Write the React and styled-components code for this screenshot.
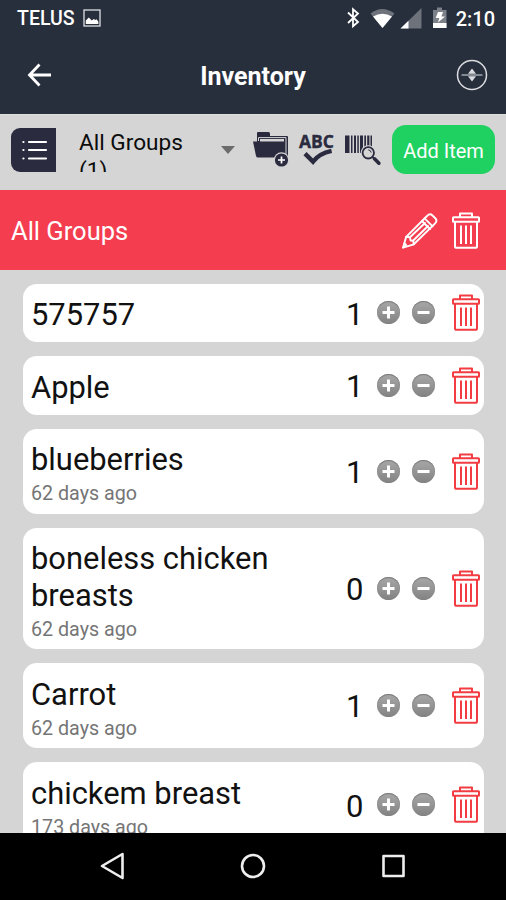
import React from 'react';
import styled, { createGlobalStyle } from 'styled-components';

const GlobalStyle = createGlobalStyle`
  * {
    box-sizing: border-box;
  }

  body {
    margin: 0;
    font-family: Roboto, "Liberation Sans", sans-serif;
  }

  button {
    padding: 0;
    border: 0;
    background: none;
    font-family: inherit;
  }

  svg {
    display: block;
    flex: none;
    overflow: visible;
  }
`;

const Screen = styled.div`
  display: flex;
  flex-direction: column;
  width: 506px;
  height: 900px;
  overflow: hidden;
  background: #d5d5d5;
`;

const Header = styled.header`
  flex: none;
  height: 114px;
  background: #272e3c;
  color: #fff;
`;

const StatusBar = styled.div`
  display: flex;
  align-items: center;
  height: 36px;
  padding: 0 11px 0 17px;
  font-size: 20px;
  font-weight: 500;
  line-height: 36px;
`;

const Carrier = styled.span`
  width: 66px;
  padding-top: 2px;
  font-size: 19.5px;
`;

const Clock = styled.span`
  padding-top: 2px;
`;

const StatusIcons = styled.div`
  display: flex;
  align-items: center;
  margin-left: auto;
  margin-right: 8px;
`;

const TitleBar = styled.div`
  display: grid;
  grid-template-columns: 60px 1fr 60px;
  align-items: center;
  height: 77px;
`;

const Title = styled.h1`
  margin: 4px 0 0;
  font-size: 25px;
  font-weight: 700;
  line-height: 30px;
  text-align: center;
`;

const IconButton = styled.button`
  display: flex;
  justify-self: ${(props) => props.$align || 'center'};
  margin-right: ${(props) => props.$gap || 0}px;
`;

const Toolbar = styled.div`
  display: flex;
  align-items: center;
  flex: none;
  height: 76px;
  padding: 0 11px;
  border-top: 1px solid #dedede;
`;

const ListButton = styled.button`
  display: flex;
  align-items: center;
  justify-content: center;
  width: 45px;
  height: 44px;
  margin-top: -5px;
  border-radius: 9px 0 0 9px;
  background: #2b2b40;
`;

const GroupSelect = styled.div`
  display: flex;
  align-items: center;
  width: 157px;
  height: 43px;
  margin: -5px 17px 0 23px;
`;

const GroupLabel = styled.div`
  width: 142px;
  height: 43px;
  overflow: hidden;
  color: #0c0c0c;
  font-size: 22.6px;
  line-height: 28.5px;
`;

const ToolIcons = styled.div`
  display: flex;
  align-items: center;
  gap: 10px;
  margin-top: -5px;
`;

const AddButton = styled.button`
  width: 103px;
  height: 49px;
  margin: -6px 0 0 auto;
  padding-top: 2px;
  border-radius: 14px;
  background: #1fd160;
  color: #fff;
  font-size: 20px;
`;

const GroupHeader = styled.div`
  display: flex;
  align-items: center;
  flex: none;
  height: 80px;
  padding: 0 26px 0 11px;
  background: #f43e50;
  color: #fff;
`;

const GroupName = styled.h2`
  flex: 1;
  margin: 1px 0 0;
  font-size: 25.5px;
  font-weight: 400;
`;

const List = styled.main`
  display: flex;
  flex: 1;
  flex-direction: column;
  gap: 14px;
  min-height: 0;
  padding: 14px 22.5px 0 22.5px;
  overflow: hidden;
`;

const Card = styled.div`
  display: flex;
  align-items: center;
  flex: none;
  padding: 13.2px 4px 8.7px 8.5px;
  border-radius: 14px;
  background: #fff;
`;

const ItemText = styled.div`
  width: 260px;
`;

const ItemName = styled.div`
  color: #111;
  font-size: 30.9px;
  line-height: 36.5px;
`;

const ItemAge = styled.div`
  margin-top: 3.5px;
  color: #757575;
  font-size: 19.7px;
  line-height: 23.2px;
`;

const Controls = styled.div`
  display: flex;
  align-items: center;
  margin: -5px 0 0 auto;
`;

const Count = styled.span`
  margin: 4px 13.5px 0 0;
  color: #111;
  font-size: 31px;
  line-height: 36.5px;
`;

const RoundButton = styled.button`
  width: 23px;
  height: 23px;
  margin-right: ${(props) => props.$gap}px;
  border-radius: 50%;
  background: linear-gradient(#a8a8a8, #828282);
  box-shadow: inset 0 1px 1px #777;
`;

const NavBar = styled.nav`
  display: flex;
  align-items: center;
  justify-content: space-between;
  flex: none;
  height: 67px;
  padding: 0 99px 1px;
  background: #000;
`;

const Trash = ({ color }) => (
  <svg width="28" height="37" viewBox="0 0 28 37" fill="none" stroke={color} strokeWidth="2" strokeLinejoin="round">
    <path d="M8 5V1.500h12V5" />
    <rect x="1" y="5.200" width="26" height="4.600" rx="0.600" />
    <path d="M3 10v24.200q0 1.600 1.600 1.600h18.800q1.600 0 1.600-1.600V10" />
    <path d="M9 13.500v18.500M14 13.500v18.500M19 13.500v18.500" />
  </svg>
);

const Pencil = () => (
  <svg width="36" height="37" viewBox="0 0 36 37" fill="none" stroke="#fff" strokeWidth="1.900" strokeLinejoin="round" strokeLinecap="round">
    <path d="M1 35.700L4.200 24.800 25 4q3-3 5.500-.500l3 3q2.200 2.400-.600 5.200L11.800 32.300z" />
    <path d="M4.200 24.800l3.700.500.700 3.200 2.700.400.500 3.400M20 9l8 8M22.600 6.400l8 8M8 25.300L23 11M11 28.800L26 14M1.300 35.400l2.800-2.600-1.800-1.500" />
  </svg>
);

const FolderAdd = () => (
  <svg width="36" height="36" viewBox="0 0 36 36">
    <path d="M4 10V1q0-1 1-1h10.500q1.500 0 1.500 1.500V4h17q1 0 1 1v20H31V7H7v4z" fill="#2b2b40" />
    <path d="M5.500 9V5.600H33V25" fill="none" stroke="#d5d5d5" />
    <path d="M0 9.500h31.500V25.500H5q-1.500 0-2-1.500z" fill="#2b2b40" />
    <circle cx="28.500" cy="28" r="7.700" fill="#d5d5d5" />
    <circle cx="28.500" cy="28" r="6.600" fill="#2b2b40" />
    <path d="M28.500 24.500v7M25 28h7" stroke="#fff" strokeWidth="1.700" />
  </svg>
);

const SpellCheck = () => (
  <svg width="36" height="32" viewBox="0 0 36 32">
    <text x="0" y="14" fontFamily="Open Sans" fontWeight="700" fontSize="18.500" textLength="35" lengthAdjust="spacingAndGlyphs" fill="#2b2b40" stroke="#2b2b40" strokeWidth="0.400">ABC</text>
    <path d="M6 19.600l8 8q6-8 18.600-10.700" fill="none" stroke="#2b2b40" strokeWidth="4.400" />
  </svg>
);

const BarcodeSearch = () => (
  <svg width="36" height="31" viewBox="0 0 36 31">
    <path d="M0 .500h4.500v17.500H0zM6 .500h1.500v17.500H6zM9 .500h2v17.500H9zM12.300 .500h1.500v17.500h-1.500zM15 .500h3v17.500h-3zM19.300 .500h1.700v17.500h-1.700zM22.200 .500h2.200v17.500h-2.200zM25.500 .500h1.500v17.500h-1.500z" fill="#2b2b40" />
    <circle cx="23.300" cy="17.800" r="7.600" fill="#d5d5d5" />
    <circle cx="23.300" cy="17.800" r="5.700" fill="none" stroke="#2b2b40" strokeWidth="1.800" />
    <path d="M23.300 14.800q2.500.300 2.900 2.800" fill="none" stroke="#2b2b40" />
    <path d="M27.500 22l2 1.800" stroke="#2b2b40" strokeWidth="1.800" />
    <path d="M29.500 23.800l4.400 4.400" stroke="#2b2b40" strokeWidth="3.600" strokeLinecap="round" />
  </svg>
);

const PictureIcon = () => (
  <svg width="18" height="18" viewBox="0 0 18 18">
    <rect x="1" y="1" width="16" height="16" fill="none" stroke="#dfe1e4" strokeWidth="1.300" />
    <path d="M2.800 15v-3.500l3-3 3 3 2-1.500 1.600 1 1.200-.800 1.800 2.600V15z" fill="#fff" />
  </svg>
);

const PhoneStatus = () => (
  <svg width="102" height="24" viewBox="0 0 102 24">
    <path d="M2 6.500l10 9.500-5 4.200V3.300L12 7.500 2 17" fill="none" stroke="#fff" strokeWidth="1.800" />
    <path d="M24.500 7.500Q36-1.500 48.500 7.500L36.500 22z" fill="#6d727b" />
    <path d="M27 10.600q9.500-5.800 19 0L36.500 22z" fill="#fff" />
    <path d="M54.500 22.500L75.500 2v20.500z" fill="#6d727b" />
    <path d="M54.500 22.500l8-7.800v7.800z" fill="#fff" />
    <path d="M91 1.500h5V4h4.500v18H87V4h4z" fill="#7c8088" />
    <path d="M87 17h13.500v5H87zM92 6h5l-1.600 4.500H99L92 16.500l1.300-4.500h-3.600z" fill="#fff" />
  </svg>
);

const items = [
  { name: '575757', count: 1 },
  { name: 'Apple', count: 1 },
  { name: 'blueberries', age: '62 days ago', count: 1 },
  { name: 'boneless chicken breasts', age: '62 days ago', count: 0 },
  { name: 'Carrot', age: '62 days ago', count: 1 },
  { name: 'chickem breast', age: '173 days ago', count: 0 },
];

const Item = ({ item }) => (
  <Card>
    <ItemText>
      <ItemName>{item.name}</ItemName>
      {item.age && <ItemAge>{item.age}</ItemAge>}
    </ItemText>
    <Controls>
      <Count>{item.count}</Count>
      <RoundButton $gap={12} aria-label="Increase">
        <svg width="23" height="23" viewBox="0 0 23 23" stroke="#fff" strokeWidth="3">
          <path d="M11.500 5.500v12M5.500 11.500h12" />
        </svg>
      </RoundButton>
      <RoundButton $gap={16.5} aria-label="Decrease">
        <svg width="23" height="23" viewBox="0 0 23 23" stroke="#fff" strokeWidth="3">
          <path d="M5.500 11.500h12" />
        </svg>
      </RoundButton>
      <IconButton aria-label="Delete">
        <Trash color="#f23c42" />
      </IconButton>
    </Controls>
  </Card>
);

const App = () => (
  <Screen>
    <GlobalStyle />
    <Header>
      <StatusBar>
        <Carrier>TELUS</Carrier>
        <PictureIcon />
        <StatusIcons>
          <PhoneStatus />
        </StatusIcons>
        <Clock>2:10</Clock>
      </StatusBar>
      <TitleBar>
        <IconButton $align="end" $gap={9} aria-label="Back">
          <svg width="24" height="24" viewBox="0 0 24 24" fill="none" stroke="#fff" strokeWidth="2.800">
            <path d="M12.500 1.500L2.500 12l10 10.500M2.500 12H24" />
          </svg>
        </IconButton>
        <Title>Inventory</Title>
        <IconButton $align="end" $gap={18} aria-label="Expand">
          <svg width="32" height="32" viewBox="0 0 32 32">
            <circle cx="16" cy="16" r="14.500" fill="none" stroke="#dcdde0" strokeWidth="1.500" />
            <path d="M5.500 16h21" stroke="#b7bac0" strokeWidth="1.300" />
            <path d="M12 14.800L16 9.500l4 5.300zM12 17.200h8L16 22.500z" fill="#dcdde0" />
          </svg>
        </IconButton>
      </TitleBar>
    </Header>
    <Toolbar>
      <ListButton aria-label="List view">
        <svg width="26" height="22" viewBox="0 0 26 22" stroke="#fff" strokeWidth="2.200" strokeLinecap="round">
          <path d="M8 3h17M8 11h17M8 19.500h17M2.400 3h.100M2.400 11h.100M2.400 19.500h.100" />
        </svg>
      </ListButton>
      <GroupSelect>
        <GroupLabel>All Groups<br />(1)</GroupLabel>
        <svg width="14" height="8" viewBox="0 0 14 8">
          <path d="M0 0h14L7 8z" fill="#6c6c6c" />
        </svg>
      </GroupSelect>
      <ToolIcons>
        <IconButton aria-label="Add group"><FolderAdd /></IconButton>
        <IconButton aria-label="Check names"><SpellCheck /></IconButton>
        <IconButton aria-label="Scan barcode"><BarcodeSearch /></IconButton>
      </ToolIcons>
      <AddButton>Add Item</AddButton>
    </Toolbar>
    <GroupHeader>
      <GroupName>All Groups</GroupName>
      <IconButton $gap={14} aria-label="Rename group"><Pencil /></IconButton>
      <IconButton aria-label="Delete group"><Trash color="#fff" /></IconButton>
    </GroupHeader>
    <List>
      {items.map((item) => <Item key={item.name} item={item} />)}
    </List>
    <NavBar>
      <svg width="27" height="28" viewBox="0 0 27 28" fill="none" stroke="#eee" strokeWidth="2.600" strokeLinejoin="round">
        <path d="M23.500 2L3 14l20.500 12z" />
      </svg>
      <svg width="28" height="28" viewBox="0 0 28 28" fill="none" stroke="#eee" strokeWidth="2.600">
        <circle cx="14" cy="14" r="11" />
      </svg>
      <svg width="27" height="28" viewBox="0 0 27 28" fill="none" stroke="#eee" strokeWidth="2.600" strokeLinejoin="round">
        <path d="M3.500 4h20v20h-20z" />
      </svg>
    </NavBar>
  </Screen>
);

export default App;
